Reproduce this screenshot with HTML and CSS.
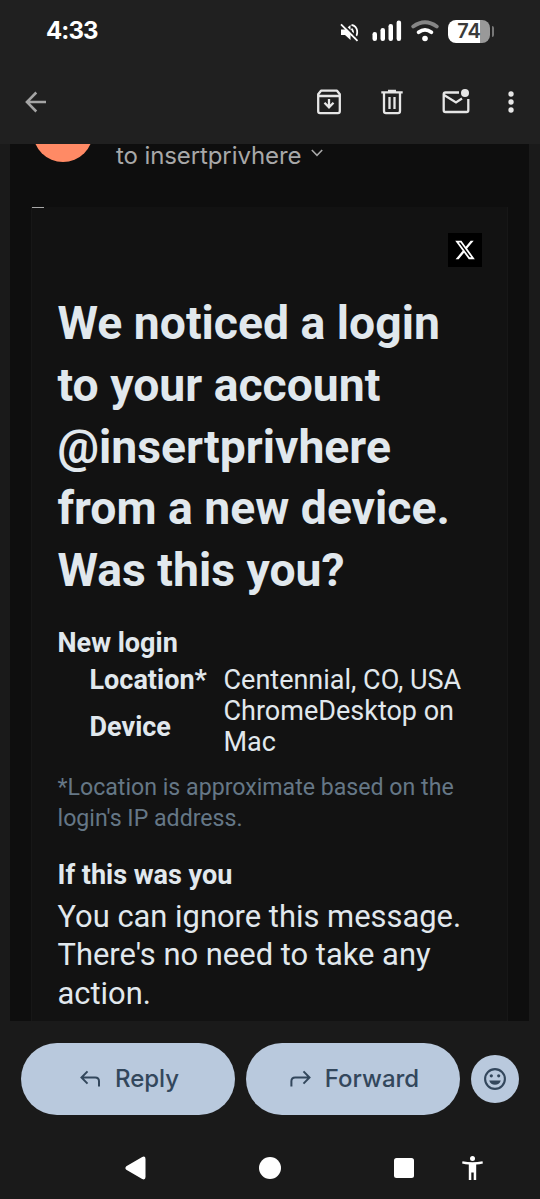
FILE: index.html
```html
<!DOCTYPE html>
<html lang="en">
<head>
<meta charset="utf-8">
<title>Mail</title>
<link rel="stylesheet" href="styles.css">
</head>
<body>
<div class="screen">
  <header class="header">
    <div class="status">
      <span class="clock">4:33</span>
      <div class="status-icons">
        <svg class="mute" width="19" height="19" viewBox="0 0 19 19" fill="none" stroke="#fff" stroke-width="1.8">
          <path d="M1 6.500h4l5.500-4.500v15l-5.500-5H1z" fill="#fff" stroke="none"/>
          <path d="M11.500 5.600q3 3.400 0 7M11.500 1.800c7 1.500 7 9.500 3 13.500"/>
          <path d="M2.600.6l16 16" stroke="#202020" stroke-width="2"/>
          <path d="M1 1.300l16.500 16.500"/>
        </svg>
        <svg class="signal" width="30" height="22" viewBox="0 0 30 22" fill="#fff">
          <rect x="0.500" y="12" width="4.500" height="9" rx="2.200"/>
          <rect x="8.500" y="8" width="4.500" height="13" rx="2.200"/>
          <rect x="16.500" y="4" width="4.500" height="17" rx="2.200"/>
          <rect x="24.600" y="0.500" width="4.500" height="20.500" rx="2.200"/>
        </svg>
        <svg class="wifi" width="28" height="22" viewBox="0 0 28 22" fill="none" stroke-linecap="round" stroke-width="3.800">
          <path d="M2.200 6.500Q14-2 25.800 6.500" stroke="#868686"/>
          <path d="M7.600 12.200q6.400-4.600 12.800 0" stroke="#fff"/>
          <circle cx="14" cy="18.500" r="2.800" fill="#fff"/>
        </svg>
        <div class="battery"><span class="battery-level">74</span><i class="battery-tip"></i></div>
      </div>
    </div>
    <div class="toolbar">
      <svg class="back" width="22" height="22" viewBox="0 0 22 22" fill="none" stroke="#a5a5a5" stroke-width="2.500"><path d="M21 11H2.500M11.300 1.500L1.900 11l9.400 9.500"/></svg>
      <div class="actions">
        <svg width="24" height="26" viewBox="0 0 24 26" fill="none" stroke="#e6e6e6" stroke-width="2.300">
          <path d="M1.200 5.300L4 1.700h16l2.800 3.600v17q0 1.800-1.800 1.800H3q-1.800 0-1.800-1.800zM1.200 7h21.600" stroke-linejoin="round"/>
          <path d="M12 10v8M7.500 13.800l4.500 4.500 4.500-4.500"/>
        </svg>
        <svg width="22" height="26" viewBox="0 0 22 26" fill="none" stroke="#e6e6e6" stroke-width="2.300">
          <path d="M.3 3.300h21.400M7 1.800h8M3 4v18q0 2.100 2 2.100h12q2 0 2-2.100V4M8.500 8v12M13.500 8v12"/>
        </svg>
        <svg width="28" height="26" viewBox="0 0 28 26" fill="none" stroke="#e6e6e6" stroke-width="2.300">
          <path d="M17 3.500H3.500Q1.700 3.500 1.700 5.300v15.900q0 1.800 1.800 1.800h21q1.800 0 1.800-1.800V10M2 6l12 7.500 6-4"/>
          <circle cx="23" cy="4" r="4" fill="#e6e6e6" stroke="none"/>
        </svg>
        <svg width="6" height="22" viewBox="0 0 6 22" fill="#e6e6e6"><circle cx="3" cy="3" r="2.700"/><circle cx="3" cy="11" r="2.700"/><circle cx="3" cy="19" r="2.700"/></svg>
      </div>
    </div>
  </header>

  <main class="mail">
    <div class="sender">
      <svg class="avatar" width="60" height="18" viewBox="0 0 60 18"><circle cx="30" cy="-12" r="30" fill="#ff8a65"/></svg>
      <span class="recipient">to insertprivhere</span>
      <svg class="chevron" width="12" height="8" viewBox="0 0 12 8" fill="none" stroke="#a8a8a8" stroke-width="1.600"><path d="M.8 1l5.200 5.300L11.200 1"/></svg>
    </div>
    <article class="card">
      <div class="preheader"></div>
      <div class="logo">
        <svg width="20" height="20" viewBox="1 1.400 22 21.200" preserveAspectRatio="none" fill="#fff"><path d="M18.244 2.250h3.308l-7.227 8.260 8.502 11.240H16.170l-5.214-6.817L4.990 21.750H1.680l7.730-8.835L1.254 2.250H8.080l4.713 6.231zm-1.161 17.520h1.833L7.084 4.126H5.117z"/></svg>
      </div>
      <h1 class="title">We noticed a login<br>to your account<br>@insertprivhere<br>from a new device.<br>Was this you?</h1>
      <h2 class="subhead login-head">New login</h2>
      <dl class="details">
        <dt>Location*</dt><dd>Centennial, CO, USA</dd>
        <dt>Device</dt><dd>ChromeDesktop on<br>Mac</dd>
      </dl>
      <p class="note">*Location is approximate based on the<br>login's IP address.</p>
      <h2 class="subhead you-head">If this was you</h2>
      <p class="message">You can ignore this message.<br>There's no need to take any<br>action.</p>
    </article>
  </main>

  <div class="replies">
    <div class="pill">
      <svg width="21" height="18" viewBox="0 0 21 18" fill="none" stroke="#33475c" stroke-width="2"><path d="M19 16.500v-5.200q0-3.800-3.800-3.800H2M7.500 1.400L1.500 7.500l6 6.100"/></svg>
      <span>Reply</span>
    </div>
    <div class="pill">
      <svg width="21" height="18" viewBox="0 0 21 18" fill="none" stroke="#33475c" stroke-width="2"><path d="M1.400 16.500v-5.200q0-3.800 3.800-3.800H19M13.500 1.400l6 6.100-6 6.100"/></svg>
      <span>Forward</span>
    </div>
    <div class="emoji">
      <svg width="22" height="22" viewBox="0 0 22 22"><circle cx="11" cy="11" r="9.900" fill="none" stroke="#33475c" stroke-width="2.100"/><g fill="#33475c"><circle cx="7.300" cy="7.800" r="1.600"/><circle cx="14.700" cy="7.800" r="1.600"/><path d="M5.200 12.500h11.600q-1.500 4.300-5.800 4.300t-5.800-4.300z"/></g></svg>
    </div>
  </div>

  <nav class="navbar">
    <svg width="22" height="24" viewBox="0 0 22 24" fill="#fff"><path d="M1.300 10.200L17.200.9Q20.500-.3 20.500 3v18q0 3.300-3.300 2.100L1.300 13.800q-1.800-1.800 0-3.600z"/></svg>
    <svg width="22" height="22" viewBox="0 0 22 22" fill="#fff"><circle cx="11" cy="11" r="11"/></svg>
    <svg width="20" height="20" viewBox="0 0 20 20" fill="#fff"><rect width="20" height="20" rx="2.500"/></svg>
    <svg width="21" height="24" viewBox="0 0 21 24" fill="#fff"><circle cx="10.500" cy="2.600" r="2.500"/><path d="M.5 5.200q10 2.200 20 0l.4 2.300q-3.400.8-6.700 1V24h-2.500v-7.500H9.300V24H6.800V8.500q-3.300-.2-6.700-1z"/></svg>
  </nav>
</div>
</body>
</html>
```

FILE: styles.css
```css
* { box-sizing: border-box; }
body { margin: 0; background: #1a1a1a; font-family: Roboto, sans-serif; }
svg { display: block; flex: none; }
h1, h2, p, dl, dd { margin: 0; }

.screen { width: 540px; height: 1199px; display: flex; flex-direction: column; white-space: nowrap; }

.header { flex: none; height: 144px; background: #202020; }
.status { height: 62px; display: flex; justify-content: space-between; align-items: center; padding: 0 46px; }
.clock { font: 700 24px/30px Inter, sans-serif; color: #fff; letter-spacing: -0.9px; }
.status-icons { display: flex; align-items: center; }
.mute { margin: 3px 13px 0 0; }
.signal { margin-right: 9px; }
.wifi { margin-right: 9px; }
.battery { display: flex; align-items: center; gap: 2px; }
.battery-level { width: 42px; height: 23px; border-radius: 8px; background: linear-gradient(90deg, #fff 76%, #999 76%); color: #3a3a3a; font: 600 20px/23px Inter, sans-serif; text-align: center; }
.battery-tip { width: 2px; height: 11px; border-radius: 0 2px 2px 0; background: #777; }

.toolbar { height: 80px; display: flex; align-items: center; justify-content: space-between; padding: 0 26px 0 25px; }
.actions { display: flex; align-items: center; gap: 39px; }
.actions svg:nth-child(2) { margin-left: 1px; }
.actions svg:nth-child(4) { margin-left: -1px; }

.mail { flex: none; width: 519px; height: 877px; margin-left: 10px; padding: 0 21px; background: #0e0e0e; }
.sender { height: 63px; display: flex; align-items: flex-start; padding-left: 2px; }
.recipient { margin-left: 23px; font: 400 24px/24px Inter, sans-serif; letter-spacing: -0.1px; color: #a8a8a8; }
.chevron { margin: 5px 0 0 10px; }
.card { height: 814px; padding: 0 25px 0 25.500px; background: #121212; border: 1px solid #171717; border-width: 0 1px; color: #e1e8ed; }
.preheader { width: 12px; height: 1px; margin: 0 0 25px -25.500px; background: #a8a8a8; }
.logo { width: 34px; height: 34px; margin: 0 0 26px auto; display: flex; align-items: center; justify-content: center; background: #000; }
.title { font-size: 46.300px; line-height: 61.800px; font-weight: 700; }
.subhead { font-size: 27px; line-height: 31px; font-weight: 700; }
.login-head { margin-top: 26px; }
.details { display: grid; grid-template-columns: 134px 1fr; align-items: center; margin: 6.500px 0 0 32px; font-size: 27px; line-height: 30.900px; }
.details dt { font-weight: 700; }
.note { margin-top: 14.500px; font-size: 23.150px; line-height: 30.900px; color: #657786; }
.you-head { margin-top: 25px; }
.message { margin-top: 7px; font-size: 30.900px; line-height: 38.600px; }

.replies { flex: none; height: 116px; display: flex; align-items: center; gap: 11px; padding: 0 21px; }
.pill { width: 214px; height: 72px; padding-left: 3px; border-radius: 36px; background: #b9c9dd; color: #33475c; display: flex; align-items: center; justify-content: center; gap: 14px; font: 500 24px/32px Inter, sans-serif; }
.emoji { flex: none; width: 48px; height: 48px; border-radius: 50%; background: #b9c9dd; display: flex; align-items: center; justify-content: center; }

.navbar { flex: none; height: 62px; display: flex; align-items: center; padding-left: 125px; }
.navbar svg:nth-child(2) { margin-left: 112px; }
.navbar svg:nth-child(3) { margin-left: 113px; }
.navbar svg:nth-child(4) { margin-left: 48px; }
```
